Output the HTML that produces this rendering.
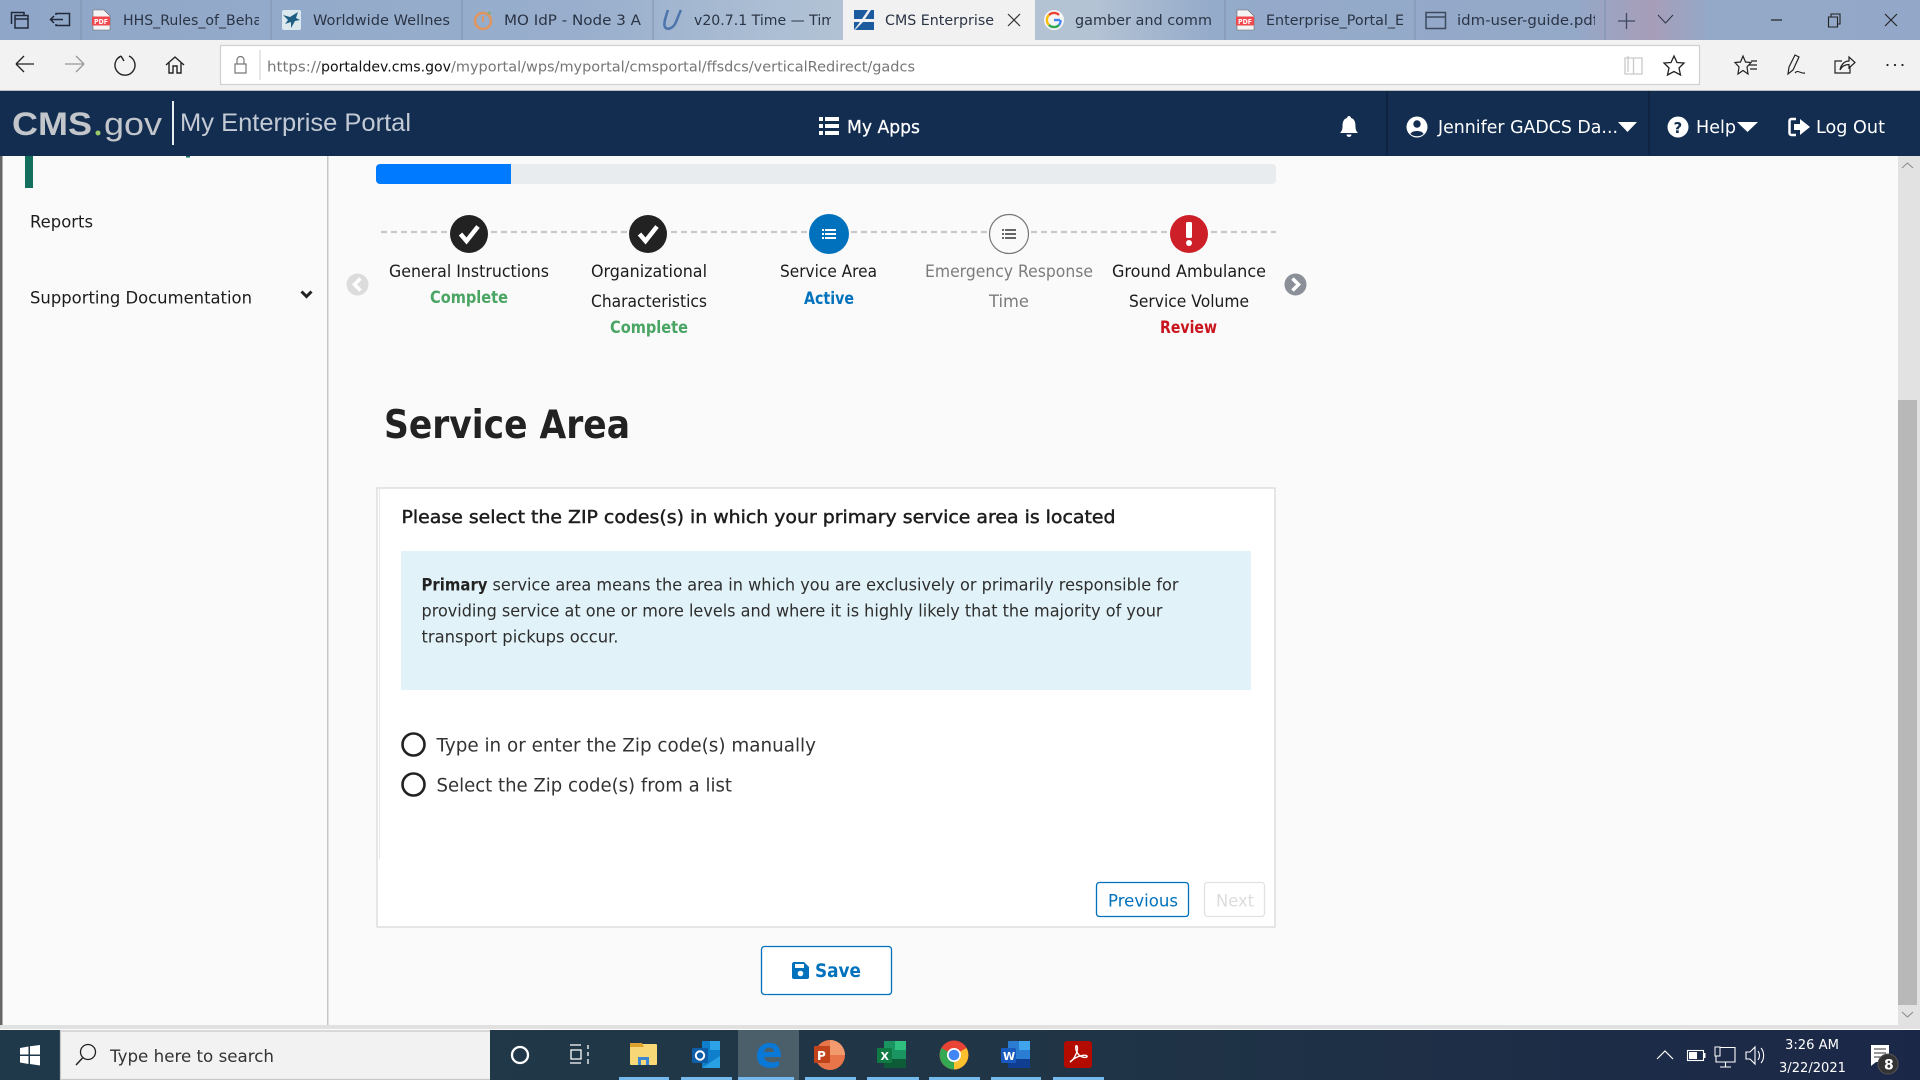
<!DOCTYPE html>
<html lang="en"><head><meta charset="utf-8"><title>CMS Enterprise Portal</title>
<style>
html,body{margin:0;padding:0;background:#fafafa;width:1920px;height:1080px;overflow:hidden}
svg{display:block;position:absolute;left:0;top:0}
text{font-family:"DejaVu Sans","Liberation Sans",sans-serif;white-space:pre}
.t{font-size:14.5px;fill:#2a3445}
.n{font-size:16.5px;fill:#1c1c1c}
.b{font-size:16.5px;font-weight:700}
.w{font-size:18px;fill:#fff}
.u{font-size:14.5px;fill:#767676}
.p{font-size:17px;fill:#2e2e2e}
</style></head><body>
<svg width="1920" height="1080" viewBox="0 0 1920 1080" xmlns="http://www.w3.org/2000/svg">
<defs>
<linearGradient id="tb" x1="0" x2="1" y1="0" y2="0">
<stop offset="0" stop-color="#90a6c8"/><stop offset=".3" stop-color="#98aecc"/><stop offset=".41" stop-color="#adbfd4"/><stop offset=".44" stop-color="#b2c2d4"/><stop offset=".57" stop-color="#b4c3d4"/><stop offset=".63" stop-color="#95abca"/><stop offset=".82" stop-color="#94a8c8"/><stop offset=".86" stop-color="#a79db8"/><stop offset=".89" stop-color="#94a8c8"/><stop offset="1" stop-color="#93a7c8"/>
</linearGradient>
<linearGradient id="task" x1="0" x2="1" y1="0" y2="0"><stop offset="0" stop-color="#20394a"/><stop offset=".5" stop-color="#203646"/><stop offset="1" stop-color="#1b2747"/></linearGradient>
<clipPath id="c1"><rect x="120" y="0" width="139" height="40"/></clipPath>
<clipPath id="c2"><rect x="690" y="0" width="141" height="40"/></clipPath>
<clipPath id="c3"><rect x="1262" y="0" width="141" height="40"/></clipPath>
<clipPath id="c4"><rect x="1454" y="0" width="141" height="40"/></clipPath>
</defs>

<!-- tab bar -->
<rect width="1920" height="40" fill="url(#tb)"/>
<g stroke="#7f92ae" stroke-width="1"><path d="M81 0V40M271 0V40M462 0V40M653 0V40M1225 0V40M1415 0V40M1605 0V40"/></g>
<rect x="843" y="0" width="192" height="40" fill="#f1f1f1"/>
<g fill="none" stroke="#20293a" stroke-width="1.5">
<path d="M11.500 24V12.500H24V15M15 15.500H28V28H15ZM15 19H28"/>
<path d="M56 15V13.500H69.500V25.500H56V24M50.500 19.500H63M54 16L50.500 19.500L54 23"/>
</g>
<g id="pdf"><path d="M93 10H104L110 16V30H93Z" fill="#f4f4f4" stroke="#666" stroke-width=".6"/><rect x="92" y="16.500" width="18" height="9" rx="1" fill="#f0484d"/><text x="94" y="24" font-size="7" font-weight="700" fill="#fff" textLength="14" lengthAdjust="spacingAndGlyphs">PDF</text></g>
<text class="t" clip-path="url(#c1)" x="123" y="25" textLength="139" lengthAdjust="spacingAndGlyphs">HHS_Rules_of_Beha</text>
<rect x="282" y="10" width="19" height="20" rx="2" fill="#dbe9ee"/><path d="M283 15L290 17L298 12L296 18L300 20L295 21L291 28L291 22L285 24L288 20Z" fill="#1c5f82"/>
<text class="t" x="313" y="25" textLength="137" lengthAdjust="spacingAndGlyphs">Worldwide Wellnes</text>
<circle cx="483" cy="21" r="8" fill="none" stroke="#e0955c" stroke-width="2.500"/><path d="M483 16V22" stroke="#e0955c" stroke-width="2"/><path d="M487 14L490 11L491 14Z" fill="#7fae6a"/>
<text class="t" x="504" y="25" textLength="137" lengthAdjust="spacingAndGlyphs">MO IdP - Node 3 A</text>
<path d="M668 10C666 16 663 24 665 27C667 30 672 29 675 24C677 20 679 14 681 10" fill="none" stroke="#4c74ad" stroke-width="2.500"/>
<text class="t" clip-path="url(#c2)" x="694" y="25" textLength="141" lengthAdjust="spacingAndGlyphs">v20.7.1 Time — Tim</text>
<path d="M854 10H868L862 19H854ZM871 10H874V19H865ZM854 22H860L854 30ZM863 22H874V30H855Z" fill="#1c5b9e"/>
<text class="t" x="885" y="25" textLength="109" lengthAdjust="spacingAndGlyphs">CMS Enterprise</text>
<path d="M1008 14L1020 26M1020 14L1008 26" stroke="#333" stroke-width="1.200"/>
<circle cx="1054" cy="20" r="10" fill="#f5f5f5"/>
<path d="M1060 20H1054" stroke="#4285f4" stroke-width="2.400"/><path d="M1059 15A7 7 0 0 0 1049 15" stroke="#ea4335" stroke-width="2.400" fill="none"/><path d="M1049 15A7 7 0 0 0 1049 25" stroke="#fbbc05" stroke-width="2.400" fill="none"/><path d="M1049 25A7 7 0 0 0 1059 25" stroke="#34a853" stroke-width="2.400" fill="none"/><path d="M1059 25A7 7 0 0 0 1060.500 20" stroke="#4285f4" stroke-width="2.400" fill="none"/>
<text class="t" x="1075" y="25" textLength="137" lengthAdjust="spacingAndGlyphs">gamber and comm</text>
<use href="#pdf" x="1144"/>
<text class="t" clip-path="url(#c3)" x="1266" y="25" textLength="142" lengthAdjust="spacingAndGlyphs">Enterprise_Portal_Ei</text>
<path d="M1426 12.500H1445.500V28.500H1426ZM1426 17H1445.500" fill="none" stroke="#3d4a5e" stroke-width="1.500"/>
<text class="t" clip-path="url(#c4)" x="1457" y="25" textLength="141" lengthAdjust="spacingAndGlyphs">idm-user-guide.pdf</text>
<path d="M1618 21H1635M1626.500 13V29" stroke="#3d4a5e" stroke-width="1.300"/>
<path d="M1658 15L1665.500 23L1673 15" fill="none" stroke="#2a3445" stroke-width="1"/>
<path d="M1771 20H1782" stroke="#222" stroke-width="1.200"/>
<path d="M1828.500 17H1837.500V27H1828.500ZM1831 17V14H1840V24H1837.500" fill="none" stroke="#222" stroke-width="1.100"/>
<path d="M1885 14L1897 26M1897 14L1885 26" stroke="#222" stroke-width="1.100"/>

<!-- address bar -->
<rect y="40" width="1920" height="50" fill="#f2f2f2"/>
<rect y="90" width="1920" height="1" fill="#bdbdbd"/>
<rect x="220.500" y="45.500" width="1479" height="39" fill="#fff" stroke="#d0d0d0" stroke-width="1.200"/>
<path d="M260 50V80" stroke="#ccc"/>
<path d="M16 64H34M16 64L24 56M16 64L24 72" fill="none" stroke="#222" stroke-width="1.300"/>
<path d="M65 64H84M84 64L76 56M84 64L76 72" fill="none" stroke="#999" stroke-width="1.300"/>
<path d="M121 56A10 10 0 1 0 129 56M121 56L124 61M121 56L117 59" fill="none" stroke="#222" stroke-width="1.400"/>
<path d="M166 65L175 57L184 65M169 63V73H173V66H177V73H181V63" fill="none" stroke="#222" stroke-width="1.400"/>
<path d="M235 64H246V73H235ZM237 64V60A3.500 3.500 0 0 1 244 60V64" fill="none" stroke="#777" stroke-width="1.200"/>
<text class="u" x="267" y="71.500" textLength="54" lengthAdjust="spacingAndGlyphs">https://</text>
<text class="u" style="fill:#111" x="321" y="71.500" textLength="130" lengthAdjust="spacingAndGlyphs">portaldev.cms.gov</text>
<text class="u" x="451" y="71.500" textLength="464" lengthAdjust="spacingAndGlyphs">/myportal/wps/myportal/cmsportal/ffsdcs/verticalRedirect/gadcs</text>
<path d="M1625 58H1642V74H1625ZM1633.500 58V74M1628 56V72" fill="none" stroke="#c9c9c9" stroke-width="1.300"/>
<path d="M1674 56L1677 62.500L1684 63L1679 68L1680.500 75L1674 71.500L1667.500 75L1669 68L1664 63L1671 62.500Z" fill="none" stroke="#222" stroke-width="1.300"/>
<path d="M1743 56L1745.500 62L1751 62.500L1747 67L1748 74L1743 70.500L1738 74L1739 67L1735 62.500L1740.500 62ZM1749 65H1757M1750 69H1757M1751 61H1757" fill="none" stroke="#222" stroke-width="1.200"/>
<path d="M1788 74L1789 67L1795 55L1799 57L1793 70ZM1795 73C1798 69 1800 74 1805 73" fill="none" stroke="#222" stroke-width="1.200"/>
<path d="M1850 66V73H1835V61H1842M1840 70C1841 64 1845 61 1849 61V57L1855 62.500L1849 68V64.500C1845 64.500 1842 66 1840 70Z" fill="none" stroke="#222" stroke-width="1.200"/>
<g fill="#222"><circle cx="1887.500" cy="65" r="1.100"/><circle cx="1895" cy="65" r="1.100"/><circle cx="1902.500" cy="65" r="1.100"/></g>

<!-- page -->
<rect y="155" width="1898" height="870" fill="#fafafa"/>
<rect y="155" width="2.500" height="870" fill="#666"/>
<rect x="327" y="155" width="1.500" height="870" fill="#c6c6c6"/>
<rect x="25" y="155" width="8" height="33" fill="#126e5d"/>
<rect x="186" y="155" width="4" height="2.500" fill="#126e5d"/>
<rect y="1025" width="1920" height="4" fill="#e1e1e1"/>
<rect y="1029" width="1920" height="1" fill="#fdfdfd"/>
<rect x="1898" y="155" width="22" height="870" fill="#e2e2e2"/>
<rect x="1898" y="400" width="19" height="605" fill="#b8b8b8"/>
<path d="M1902 168L1907.500 163L1913 168" fill="none" stroke="#888" stroke-width="1"/>
<path d="M1902 1012L1907.500 1017L1913 1012" fill="none" stroke="#888" stroke-width="1"/>

<!-- portal header -->
<rect y="91" width="1920" height="65" fill="#122d50"/>
<text x="12" y="135" font-size="32" font-weight="700" fill="#c2c6cb" style="font-family:'Liberation Sans',sans-serif" textLength="80" lengthAdjust="spacingAndGlyphs">CMS</text>
<circle cx="98" cy="133" r="2.500" fill="#9cc86a"/>
<text x="104" y="135" font-size="32" fill="#c2c6cb" style="font-family:'Liberation Sans',sans-serif" textLength="58" lengthAdjust="spacingAndGlyphs">gov</text>
<rect x="172" y="101" width="2" height="44" fill="#e9edf2"/>
<text x="180" y="131" font-size="25" fill="#c3cad4" style="font-family:'Liberation Sans',sans-serif" textLength="231" lengthAdjust="spacingAndGlyphs">My Enterprise Portal</text>
<g fill="#fff"><rect x="819" y="117" width="4" height="4"/><rect x="819" y="124" width="4" height="4"/><rect x="819" y="131" width="4" height="4"/><rect x="825" y="117" width="14" height="4"/><rect x="825" y="124" width="14" height="4"/><rect x="825" y="131" width="14" height="4"/></g>
<text class="w" x="847" y="133" stroke="#fff" stroke-width=".25" textLength="73" lengthAdjust="spacingAndGlyphs">My Apps</text>
<path d="M1349 116C1350 116 1351 117 1351 118C1355 119 1355.500 123 1355.500 127C1355.500 130 1357 132 1358 133H1340C1341 132 1342.500 130 1342.500 127C1342.500 123 1343 119 1347 118C1347 117 1348 116 1349 116ZM1346.500 134.500H1351.500A2.500 2.500 0 0 1 1346.500 134.500Z" fill="#fff"/>
<path d="M1387 91V155M1649 91V155" stroke="#0c1e36" stroke-width="1.200"/>
<circle cx="1417" cy="127" r="10.500" fill="#fff"/><circle cx="1417" cy="124" r="3.700" fill="#122d50"/><path d="M1410.500 134C1411.500 130 1422.500 130 1423.500 134C1420 137 1414 137 1410.500 134Z" fill="#122d50"/>
<text class="w" x="1438" y="133" textLength="180" lengthAdjust="spacingAndGlyphs">Jennifer GADCS Da...</text>
<path d="M1618 122H1637L1627.500 132Z" fill="#fff"/>
<circle cx="1678" cy="127" r="10.500" fill="#fff"/><text x="1673.500" y="133" font-size="15" font-weight="700" fill="#122d50">?</text>
<text class="w" x="1696" y="133" textLength="40" lengthAdjust="spacingAndGlyphs">Help</text>
<path d="M1737 122H1758L1747.500 132Z" fill="#fff"/>
<path d="M1796 119H1791.500C1790 119 1789.500 120 1789.500 121V133C1789.500 134 1790 135 1791.500 135H1796" fill="none" stroke="#fff" stroke-width="2.500"/><path d="M1794 124H1800V119L1810 127L1800 135V130H1794Z" fill="#fff"/>
<text class="w" x="1816" y="133" textLength="69" lengthAdjust="spacingAndGlyphs">Log Out</text>

<text class="n" x="30" y="227.500" textLength="63" lengthAdjust="spacingAndGlyphs">Reports</text>
<text class="n" x="30" y="303.500" textLength="222" lengthAdjust="spacingAndGlyphs">Supporting Documentation</text>
<path d="M301.500 291.500L306.500 296.500L311.500 291.500" fill="none" stroke="#222" stroke-width="3"/>

<!-- progress -->
<rect x="376" y="164" width="900" height="20" rx="4" fill="#e9ecef"/>
<path d="M380 164H511V184H380A4 4 0 0 1 376 180V168A4 4 0 0 1 380 164Z" fill="#007bff"/>

<!-- stepper -->
<path d="M381 232H1276" stroke="#c9c9c9" stroke-width="2.300" stroke-dasharray="6 4"/>
<circle cx="469" cy="234" r="19" fill="#222"/><path d="M460.500 234L466.500 241L478 226.500" fill="none" stroke="#fff" stroke-width="4.500"/>
<circle cx="648" cy="234" r="19" fill="#222"/><path d="M639.500 234L645.500 241L657 226.500" fill="none" stroke="#fff" stroke-width="4.500"/>
<circle cx="829" cy="234" r="20" fill="#0071bc"/>
<g fill="#fff"><rect x="825" y="229" width="11" height="2"/><rect x="825" y="233" width="11" height="2"/><rect x="825" y="237" width="11" height="2"/><rect x="822" y="229" width="2" height="2"/><rect x="822" y="233" width="2" height="2"/><rect x="822" y="237" width="2" height="2"/></g>
<circle cx="1009" cy="234" r="19.500" fill="#fafafa" stroke="#777" stroke-width="1.200"/>
<g fill="#666"><rect x="1005" y="229" width="11" height="2"/><rect x="1005" y="233" width="11" height="2"/><rect x="1005" y="237" width="11" height="2"/><rect x="1002" y="229" width="2" height="2"/><rect x="1002" y="233" width="2" height="2"/><rect x="1002" y="237" width="2" height="2"/></g>
<circle cx="1189" cy="234" r="19" fill="#cd1f27"/><rect x="1186" y="222" width="6" height="16" rx="1.500" fill="#fff"/><circle cx="1189" cy="243" r="3" fill="#fff"/>
<circle cx="357.500" cy="284.500" r="11" fill="#dcdcdc"/><path d="M360.500 278.500L354.500 284.500L360.500 290.500" fill="none" stroke="#fff" stroke-width="3.500"/>
<circle cx="1295.500" cy="284.500" r="11" fill="#8a8f98"/><path d="M1292.500 278.500L1298.500 284.500L1292.500 290.500" fill="none" stroke="#fff" stroke-width="3.500"/>

<text class="n" x="389" y="277" textLength="160" lengthAdjust="spacingAndGlyphs">General Instructions</text>
<text class="b" style="fill:#4aa564" x="430" y="303" textLength="78" lengthAdjust="spacingAndGlyphs">Complete</text>
<text class="n" x="591" y="277" textLength="116" lengthAdjust="spacingAndGlyphs">Organizational</text>
<text class="n" x="591" y="307" textLength="116" lengthAdjust="spacingAndGlyphs">Characteristics</text>
<text class="b" style="fill:#4aa564" x="610" y="333" textLength="78" lengthAdjust="spacingAndGlyphs">Complete</text>
<text class="n" x="780" y="277" textLength="97" lengthAdjust="spacingAndGlyphs">Service Area</text>
<text class="b" style="fill:#0071bc" x="804" y="304" textLength="50" lengthAdjust="spacingAndGlyphs">Active</text>
<text class="n" style="fill:#7c7c7c" x="925" y="277" textLength="168" lengthAdjust="spacingAndGlyphs">Emergency Response</text>
<text class="n" style="fill:#7c7c7c" x="989" y="307" textLength="40" lengthAdjust="spacingAndGlyphs">Time</text>
<text class="n" x="1112" y="277" textLength="154" lengthAdjust="spacingAndGlyphs">Ground Ambulance</text>
<text class="n" x="1129" y="307" textLength="120" lengthAdjust="spacingAndGlyphs">Service Volume</text>
<text class="b" style="fill:#c9151e" x="1160" y="333" textLength="57" lengthAdjust="spacingAndGlyphs">Review</text>

<text x="384" y="438" font-size="39" font-weight="700" fill="#222" textLength="246" lengthAdjust="spacingAndGlyphs">Service Area</text>

<!-- card -->
<rect x="377" y="488" width="898" height="439" fill="#fff" stroke="#dedede" stroke-width="1.500"/>
<rect x="379" y="489" width="1" height="370" fill="#e9e9e9"/>
<text x="401.500" y="523" font-size="18" fill="#1d1d1d" stroke="#1d1d1d" stroke-width=".45" textLength="714" lengthAdjust="spacingAndGlyphs">Please select the ZIP codes(s) in which your primary service area is located</text>
<rect x="401" y="551" width="850" height="139" fill="#e1f2f8"/>
<text x="421.500" y="590.500" font-size="17" font-weight="700" fill="#222" textLength="66" lengthAdjust="spacingAndGlyphs">Primary</text>
<text class="p" x="492.500" y="590.500" textLength="686" lengthAdjust="spacingAndGlyphs">service area means the area in which you are exclusively or primarily responsible for</text>
<text class="p" x="421.500" y="616.500" textLength="741" lengthAdjust="spacingAndGlyphs">providing service at one or more levels and where it is highly likely that the majority of your</text>
<text class="p" x="421.500" y="642.500" textLength="197" lengthAdjust="spacingAndGlyphs">transport pickups occur.</text>
<circle cx="413.500" cy="744.500" r="11" fill="#fff" stroke="#222" stroke-width="2.600"/>
<circle cx="413.500" cy="784.500" r="11" fill="#fff" stroke="#222" stroke-width="2.600"/>
<text x="436.500" y="751.500" font-size="19" fill="#333" textLength="379.500" lengthAdjust="spacingAndGlyphs">Type in or enter the Zip code(s) manually</text>
<text x="436.500" y="791.500" font-size="19" fill="#333" textLength="295.500" lengthAdjust="spacingAndGlyphs">Select the Zip code(s) from a list</text>

<rect x="1096.500" y="882.500" width="92" height="34" rx="3" fill="#fff" stroke="#0071bc" stroke-width="1.300"/>
<text x="1108" y="906.500" font-size="17" fill="#0071bc" textLength="70" lengthAdjust="spacingAndGlyphs">Previous</text>
<rect x="1204.500" y="882.500" width="60" height="34" rx="3" fill="#fff" stroke="#e2e2e2" stroke-width="1.300"/>
<text x="1216" y="906.500" font-size="17" fill="#dcdcdc" textLength="38" lengthAdjust="spacingAndGlyphs">Next</text>

<rect x="761.500" y="946.500" width="130" height="48" rx="3" fill="#fff" stroke="#0071bc" stroke-width="1.300"/>
<path d="M794 962H804L809 967V977C809 978.500 808 979 807 979H794C793 979 792 978.500 792 977V964C792 963 793 962 794 962Z" fill="#0071bc"/>
<rect x="795" y="964" width="9" height="4" fill="#fff"/><circle cx="800.500" cy="973.500" r="2.800" fill="#fff"/>
<text x="815" y="977" font-size="19" font-weight="700" fill="#0071bc" textLength="46" lengthAdjust="spacingAndGlyphs">Save</text>

<!-- taskbar -->
<rect y="1030" width="1920" height="50" fill="url(#task)"/>
<path d="M20 1048L28.500 1046.500V1054.500H20ZM30 1046.300L40 1045V1054.500H30ZM20 1056H28.500V1064L20 1062.500ZM30 1056H40V1065.500L30 1064Z" fill="#fff"/>
<rect x="60" y="1030" width="430" height="50" fill="#f2f2f2"/>
<path d="M60 1031H490M60 1079.500H490M60.500 1030V1080" stroke="#c8c8c8" stroke-width="1.200" fill="none"/>
<circle cx="88" cy="1052" r="7.500" fill="none" stroke="#222" stroke-width="1.300"/><path d="M82.500 1058L76 1065" stroke="#222" stroke-width="1.500"/>
<text x="110" y="1062" font-size="16.500" fill="#333" textLength="164" lengthAdjust="spacingAndGlyphs">Type here to search</text>
<circle cx="520" cy="1055" r="8" fill="none" stroke="#fff" stroke-width="2.300"/>
<path d="M570 1045H581M570 1063H581M571 1050H581V1059H571ZM588 1045V1049M588 1052V1056M588 1059V1064" fill="none" stroke="#fff" stroke-width="1.300"/>
<rect x="630" y="1044" width="27" height="21" rx="1" fill="#f8d777"/><path d="M630 1043H642L644 1047H630Z" fill="#dca22d"/><path d="M638 1065V1057H649V1065H646V1060H641V1065Z" fill="#3b87d1"/>
<rect x="702" y="1041" width="18" height="27" rx="1" fill="#0f7fcb"/><rect x="710" y="1041" width="10" height="9" fill="#2ea2e6"/><path d="M702 1068L720 1056V1068Z" fill="#2aa0e4"/><rect x="692" y="1048" width="16" height="15" rx="1" fill="#0f5da6"/><circle cx="700" cy="1055.500" r="4.200" fill="none" stroke="#fff" stroke-width="2"/>
<rect x="738" y="1030" width="61" height="50" fill="#4b5f6b"/>
<path d="M757 1056C757 1047 763 1043 770 1043C777 1043 781 1048 781 1057H764C765 1062 772 1064 779 1061V1066C770 1070 757 1068 757 1056ZM764 1052H774C774 1046 765 1046 764 1052Z" fill="#0a78d7"/>
<circle cx="830" cy="1055" r="15" fill="#e8744a"/><path d="M830 1040A15 15 0 0 1 845 1055H830Z" fill="#f09a6e"/><rect x="814" y="1046" width="16" height="17" rx="1" fill="#c0431c"/><text x="817" y="1060" font-size="12" font-weight="700" fill="#fff">P</text>
<rect x="884" y="1041" width="22" height="27" rx="1" fill="#1a9461"/><rect x="895" y="1041" width="11" height="9" fill="#2fbf7f"/><rect x="884" y="1059" width="22" height="9" fill="#0e5c37"/><rect x="877" y="1048" width="15" height="15" rx="1" fill="#107a45"/><text x="880.500" y="1060" font-size="11" font-weight="700" fill="#fff">X</text>
<circle cx="954" cy="1055" r="14.500" fill="#e94335"/><path d="M954 1055L966.500 1048A14.500 14.500 0 0 1 954 1069.500Z" fill="#fbc02d"/><path d="M954 1055L954 1069.500A14.500 14.500 0 0 1 941.500 1048Z" fill="#34a853"/><circle cx="954" cy="1055" r="7" fill="#fff"/><circle cx="954" cy="1055" r="5.300" fill="#4285f4"/>
<rect x="1008" y="1041" width="22" height="27" rx="1" fill="#2b7cd3"/><rect x="1019" y="1041" width="11" height="9" fill="#41a5ee"/><rect x="1008" y="1059" width="22" height="9" fill="#103f91"/><rect x="1001" y="1048" width="15" height="15" rx="1" fill="#185abd"/><text x="1003" y="1060" font-size="11" font-weight="700" fill="#fff">W</text>
<rect x="1064" y="1041" width="28" height="27" rx="3" fill="#b30b00"/>
<path d="M1070 1062C1074 1060 1079 1050 1077 1046C1075 1044 1075 1051 1079 1055C1082 1058 1088 1058 1087 1056C1085 1054 1076 1056 1070 1062Z" fill="none" stroke="#fff" stroke-width="1.400"/>
<g fill="#76b9ed"><rect x="619" y="1077" width="50" height="3"/><rect x="681" y="1077" width="51" height="3"/><rect x="738" y="1077" width="56" height="3"/><rect x="805" y="1077" width="51" height="3"/><rect x="867" y="1077" width="52" height="3"/><rect x="929" y="1077" width="51" height="3"/><rect x="991" y="1077" width="50" height="3"/><rect x="1053" y="1077" width="51" height="3"/></g>
<path d="M1657 1059L1665 1051L1673 1059" fill="none" stroke="#fff" stroke-width="1.200"/>
<rect x="1687.500" y="1050.500" width="16" height="10" fill="none" stroke="#fff" stroke-width="1.100"/><rect x="1689" y="1052" width="8" height="7" fill="#fff"/><rect x="1704" y="1053" width="1.500" height="5" fill="#fff"/>
<path d="M1716 1047.500H1735V1062H1716ZM1725.500 1062V1067M1720 1067H1731" fill="none" stroke="#fff" stroke-width="1.100"/><rect x="1715" y="1047" width="5" height="9" fill="#1d2a47" stroke="#fff" stroke-width="1"/>
<path d="M1746 1052H1750L1755 1047V1064L1750 1059H1746ZM1758 1051C1760 1054 1760 1057 1758 1060M1761 1048C1764.500 1052 1764.500 1059 1761 1063" fill="none" stroke="#fff" stroke-width="1.100"/>
<text x="1785" y="1049" font-size="13.500" fill="#fff" textLength="54" lengthAdjust="spacingAndGlyphs">3:26 AM</text>
<text x="1779" y="1072" font-size="13.500" fill="#fff" textLength="67" lengthAdjust="spacingAndGlyphs">3/22/2021</text>
<path d="M1871 1045H1889V1062H1876L1871 1066Z" fill="#fff"/><path d="M1874 1049H1886M1874 1053H1886M1874 1057H1886" stroke="#333" stroke-width="1"/>
<circle cx="1888" cy="1064" r="10" fill="#333" stroke="#555" stroke-width="1"/>
<text x="1884" y="1069.500" font-size="14" font-weight="700" fill="#fff">8</text>
</svg>
</body></html>
